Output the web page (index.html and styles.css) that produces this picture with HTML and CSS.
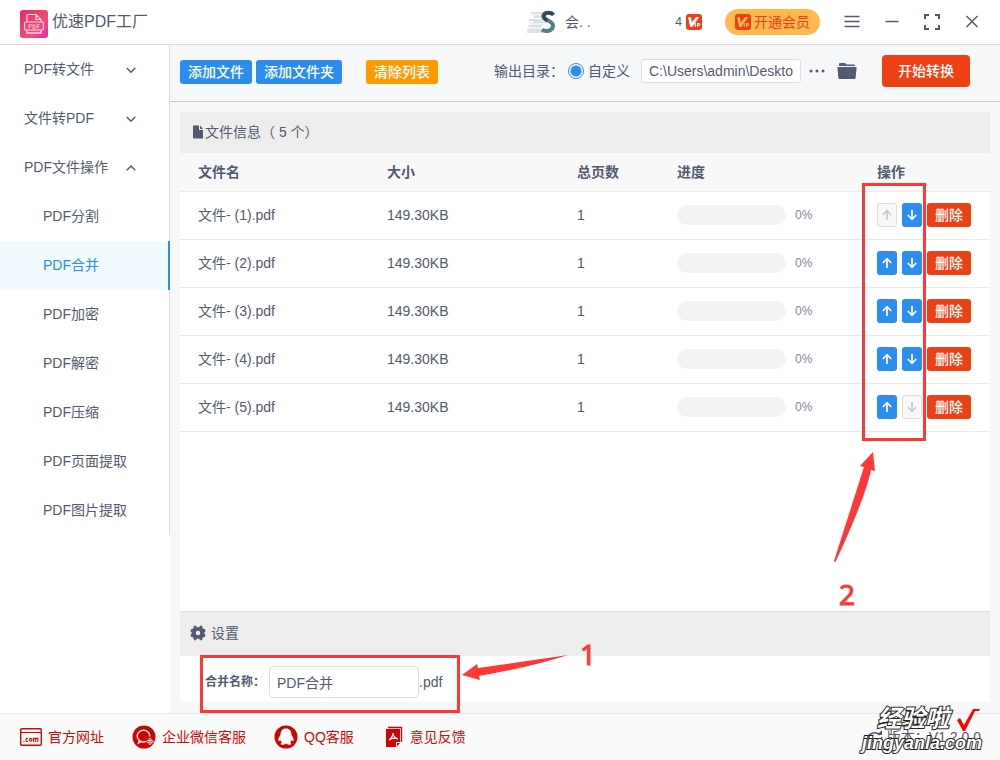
FILE: index.html
```html
<!DOCTYPE html>
<html lang="zh-CN">
<head>
<meta charset="utf-8">
<title>优速PDF工厂</title>
<link rel="stylesheet" href="styles.css">
</head>
<body>
<svg class="defs" aria-hidden="true">
  <symbol id="down" viewBox="0 0 10 10"><path d="M1.5 3.3 5 6.8l3.500-3.500" fill="none" stroke="currentColor" stroke-width="1.200"/></symbol>
  <symbol id="up" viewBox="0 0 10 10"><path d="M1.5 6.800 5 3.300l3.500 3.500" fill="none" stroke="currentColor" stroke-width="1.200"/></symbol>
  <symbol id="arrow-up" viewBox="0 0 12 12"><path d="M6 11V2M1.800 6 6 1.700 10.200 6" fill="none" stroke="currentColor" stroke-width="1.700"/></symbol>
  <symbol id="arrow-down" viewBox="0 0 12 12"><path d="M6 1v9M1.800 6 6 10.300 10.200 6" fill="none" stroke="currentColor" stroke-width="1.700"/></symbol>
  <symbol id="vip" viewBox="0 0 16 16"><rect width="16" height="16" rx="3" fill="#ee4014"/><path d="M2 3.300h3l.8 5.200L10 3h3.200L6.300 13H4.200z" fill="currentColor"/><path d="M9.300 9v4M11.500 13V9.500h1.300a.9.9 0 0 1 0 1.900h-1.300" fill="none" stroke="currentColor" stroke-width="1.100"/></symbol>
</svg>
<header class="titlebar">
  <svg class="logo" viewBox="0 0 28 28" aria-hidden="true">
    <defs><linearGradient id="lg" x1="0" y1="0" x2="1" y2="1"><stop offset="0" stop-color="#e62e5c"/><stop offset=".65" stop-color="#ee4f7d"/><stop offset="1" stop-color="#e324ac"/></linearGradient></defs>
    <rect width="28" height="28" rx="3" fill="url(#lg)"/>
    <g fill="none" stroke="#fbd3df" stroke-width="1.200"><path d="M7 12V5.500a1 1 0 0 1 1-1h8l5 5V12M16 4.500v5h5"/><rect x="4.600" y="12" width="18.800" height="8" rx="1"/><path d="M7 20v3h14v-3" stroke-width="1.500"/><path d="M9 18.500v-4h1.500q1 0 1 1t-1 1H9M13 14.500v4h.7q1.600 0 1.600-2t-1.600-2zM17.300 18.500v-4h2.200M17.300 16.500h1.800" stroke-width=".9"/></g>
  </svg>
  <h1 class="app-name">优速PDF工厂</h1>
  <div class="account">
    <svg class="avatar" viewBox="0 0 30 24" aria-hidden="true"><g fill="none" stroke-width="1"><path d="M4 3h18M7 7h10M2 10h14M6 12h14M1 16h14M0 20h20M0 22h18" stroke="#b6c4c8"/><path d="M5 5h12M3 14h15M2 18h12" stroke="#dce2e4"/></g><path d="M26 4.500C24 2 17 2 16.500 6c-.5 4 9.500 4.500 9.500 9.500 0 6-8 6.500-11 4" fill="none" stroke="#4b8289" stroke-width="4"/><path d="M26.500 5C24 1.800 17.500 1.800 16.500 6q0 3 4 4.500" fill="none" stroke="#354854" stroke-width="3.500"/></svg>
    <span class="user-name">会. .</span>
    <span class="user-tail">4</span>
    <svg class="vip" aria-hidden="true"><use href="#vip"/></svg>
  </div>
  <button class="join"><svg class="vip" aria-hidden="true"><use href="#vip"/></svg>开通会员</button>
  <div class="window-tools">
    <button class="tool" aria-label="菜单"><svg viewBox="0 0 18 18"><path d="M1.500 3.500h15M1.500 8.500h15M1.500 13.500h15"/></svg></button>
    <button class="tool" aria-label="最小化"><svg viewBox="0 0 18 18"><path d="M2.500 8.500h13"/></svg></button>
    <button class="tool" aria-label="最大化"><svg viewBox="0 0 18 18"><path d="M6 2H2v4M12 2h4v4M2 12v4h4M16 12v4h-4" stroke-width="2"/></svg></button>
    <button class="tool" aria-label="关闭"><svg viewBox="0 0 18 18"><path d="m3.500 3 11 11M14.500 3l-11 11"/></svg></button>
  </div>
</header>
<div class="body">
  <nav class="sidebar">
    <div class="menu">
      <button class="group">PDF转文件<svg><use href="#down"/></svg></button>
      <button class="group">文件转PDF<svg><use href="#down"/></svg></button>
      <button class="group">PDF文件操作<svg><use href="#up"/></svg></button>
      <a class="entry" href="#">PDF分割</a>
      <a class="entry active" href="#">PDF合并</a>
      <a class="entry" href="#">PDF加密</a>
      <a class="entry" href="#">PDF解密</a>
      <a class="entry" href="#">PDF压缩</a>
      <a class="entry" href="#">PDF页面提取</a>
      <a class="entry" href="#">PDF图片提取</a>
    </div>
  </nav>
  <main class="main">
    <div class="toolbar">
      <div class="file-actions">
        <button class="btn blue">添加文件</button>
        <button class="btn blue">添加文件夹</button>
        <button class="btn orange">清除列表</button>
      </div>
      <div class="output">
        <span class="output-label">输出目录：</span>
        <label class="radio"><input type="radio" name="dir" checked>自定义</label>
        <input class="path" type="text" value="C:\Users\admin\Deskto" aria-label="输出目录">
        <button class="icon-btn dots" aria-label="选择目录"><svg viewBox="0 0 16 4"><circle cx="2" cy="2" r="1.500"/><circle cx="8" cy="2" r="1.500"/><circle cx="14" cy="2" r="1.500"/></svg></button>
        <button class="icon-btn folder" aria-label="打开目录"><svg viewBox="0 0 20 18"><path d="M2 4V2q0-1 1-1h5l1.500 1.500H17q1 0 1 1V4z"/><path d="M1 5h18q.7 0 .6.800L18.600 16q-.1 1-1.100 1h-15q-1 0-1.100-1L.4 5.800Q.3 5 1 5z"/></svg></button>
        <button class="start">开始转换</button>
      </div>
    </div>
    <section class="panel">
      <h2 class="panel-title"><svg class="file-icon" viewBox="0 0 12 14"><path d="M1 .5h6V5h4v8.500H1zM8 .5 11 4H8z"/></svg>文件信息（ 5 个）</h2>
      <div class="table-wrap">
        <table class="files">
          <colgroup><col class="c-name"><col class="c-size"><col class="c-pages"><col class="c-progress"><col class="c-actions"></colgroup>
          <thead><tr><th>文件名</th><th>大小</th><th>总页数</th><th>进度</th><th>操作</th></tr></thead>
          <tbody>
            <tr><td>文件- (1).pdf</td><td>149.30KB</td><td>1</td><td><div class="progress"><span class="bar"></span>0%</div></td><td><div class="ops"><button class="move" disabled aria-label="上移"><svg><use href="#arrow-up"/></svg></button><button class="move" aria-label="下移"><svg><use href="#arrow-down"/></svg></button><button class="btn red">删除</button></div></td></tr>
            <tr><td>文件- (2).pdf</td><td>149.30KB</td><td>1</td><td><div class="progress"><span class="bar"></span>0%</div></td><td><div class="ops"><button class="move" aria-label="上移"><svg><use href="#arrow-up"/></svg></button><button class="move" aria-label="下移"><svg><use href="#arrow-down"/></svg></button><button class="btn red">删除</button></div></td></tr>
            <tr><td>文件- (3).pdf</td><td>149.30KB</td><td>1</td><td><div class="progress"><span class="bar"></span>0%</div></td><td><div class="ops"><button class="move" aria-label="上移"><svg><use href="#arrow-up"/></svg></button><button class="move" aria-label="下移"><svg><use href="#arrow-down"/></svg></button><button class="btn red">删除</button></div></td></tr>
            <tr><td>文件- (4).pdf</td><td>149.30KB</td><td>1</td><td><div class="progress"><span class="bar"></span>0%</div></td><td><div class="ops"><button class="move" aria-label="上移"><svg><use href="#arrow-up"/></svg></button><button class="move" aria-label="下移"><svg><use href="#arrow-down"/></svg></button><button class="btn red">删除</button></div></td></tr>
            <tr><td>文件- (5).pdf</td><td>149.30KB</td><td>1</td><td><div class="progress"><span class="bar"></span>0%</div></td><td><div class="ops"><button class="move" aria-label="上移"><svg><use href="#arrow-up"/></svg></button><button class="move" disabled aria-label="下移"><svg><use href="#arrow-down"/></svg></button><button class="btn red">删除</button></div></td></tr>
          </tbody>
        </table>
        <div class="mark mark-two"></div>
        <svg class="pointer pointer-two" viewBox="0 0 42 112" aria-hidden="true"><path d="M0 109 30 15l-4-1L39 0l2 19-4-1Q32 44 2 109q-1 2-2 0z"/></svg>
        <span class="digit digit-two">2</span>
      </div>
      <h2 class="panel-title settings-title"><svg class="gear" viewBox="0 0 16 16"><path fill-rule="evenodd" d="M4 .8h2l.7 1.400h2.600L10 .8h2l.8 2.800 2.500.9v2L14 8l1.300 1.500v2l-2.500.9-.8 2.800h-2l-.7-1.400H6.700L6 15.200H4l-.8-2.800-2.500-.9v-2L2 8 .7 6.500v-2l2.500-.9zM8 5.700a2.300 2.300 0 1 0 0 4.600 2.300 2.300 0 0 0 0-4.600z"/></svg>设置</h2>
      <div class="settings">
        <label for="merge-name">合并名称：</label>
        <input id="merge-name" type="text" value="PDF合并">
        <span>.pdf</span>
        <div class="mark mark-one"></div>
        <svg class="pointer pointer-one" viewBox="0 0 108 28" aria-hidden="true"><path d="M107 1 17 14l-1-4L1 21l18 5-1-4Q70 13 107 1z"/></svg>
        <span class="digit digit-one">1</span>
      </div>
    </section>
  </main>
</div>
<footer class="footer">
  <a href="#" class="site"><svg width="22" height="18" viewBox="0 0 22 18"><rect x=".7" y=".7" width="20.600" height="16.600" rx="1" fill="none" stroke="#c80a0a" stroke-width="1.400"/><path d="M1 4.500h20" stroke="#c80a0a"/><path d="M4 13v1M8 10.500q-2-1-2 1.300t2 1.300M9.500 11.800q0-1.500 1.200-1.500t1.200 1.500-1.200 1.500-1.200-1.500M13.500 14v-3.600h4.300V14M15.700 10.500V14" fill="none" stroke="#c80a0a" stroke-width="1.100"/></svg>官方网址</a>
  <a href="#" class="wechat"><svg width="24" height="24" viewBox="0 0 24 24"><circle cx="12" cy="12" r="11.500" fill="#cc0505"/><path d="M17.800 11.500a6.300 5.800 0 1 0-4 5M7.500 15l-1 3 3-1.500" fill="none" stroke="#f9dede" stroke-width="1.500"/><g fill="#cc0505" stroke="#f9dede"><circle cx="18" cy="14.500" r="1.200"/><circle cx="16" cy="16.500" r="1.200"/><circle cx="20" cy="16.500" r="1.200"/><circle cx="18" cy="18.500" r="1"/></g></svg>企业微信客服</a>
  <a href="#" class="qq"><svg width="24" height="24" viewBox="0 0 24 24"><circle cx="12" cy="12" r="11.500" fill="#cc0505"/><path d="M12 3.500c-3.800 0-5.500 2.700-5.500 6.500-1.500 2-2.500 4-2 6 .5.700 1.300-.5 1.800-1 .3 1.300 1 2 1.500 2.500-1.800 1-1 2.300.5 2.300 1.500 0 2.500-.5 3.700-1.300 1.200.8 2.200 1.300 3.700 1.300 1.500 0 2.300-1.300.5-2.300.5-.5 1.200-1.200 1.500-2.500.5.500 1.300 1.700 1.800 1 .5-2-.5-4-2-6 0-3.800-1.700-6.500-5.500-6.500z" fill="#fff"/></svg>QQ客服</a>
  <a href="#" class="feedback"><svg width="18" height="22" viewBox="0 0 18 22"><path d="M3 1.500h13.500V16" fill="none" stroke="#cc0505" stroke-width="1.300"/><path d="M1 3h14v13h-4v5H1zM12 17h3l-3 3.500z" fill="#cc0505"/><path d="M4 14q4-3 4-7 0 4 5 6-5-2-9 1z" fill="none" stroke="#fff" stroke-width="1.200"/></svg>意见反馈</a>
  <div class="version"><svg width="18" height="16" viewBox="0 0 18 16"><path d="M2 8a7 6 0 0 1 12-2M16 8a7 6 0 0 1-12 3" fill="none" stroke="#515a6e" stroke-width="1.500"/><path d="M11 6h5V1z" fill="#515a6e"/></svg>版本：V1.2.0.0
    <div class="watermark"><span class="wm-cn">经验啦</span><span class="wm-site">jingyanla.com</span><svg class="tick" viewBox="0 0 24 24"><path d="M1 12l3-2 4 7L17 1h7l-1 2h-4L9 23H7z" fill="#f00"/></svg></div>
  </div>
</footer>
</body>
</html>
```
FILE: styles.css
```css
* { box-sizing: border-box; }
body {
  margin: 0; min-height: 100vh; display: flex; flex-direction: column;
  background: #fff; color: #515a6e; overflow: hidden;
  font: 14px/20px "Liberation Sans", "Noto Sans CJK SC", sans-serif;
}
button, input { font: inherit; color: inherit; margin: 0; }
button { border: 0; background: none; padding: 0; }
a { color: inherit; text-decoration: none; }
h1, h2 { margin: 0; font-weight: 400; }
svg { display: block; flex: none; }
.defs { position: absolute; width: 0; height: 0; }

.titlebar { display: flex; align-items: center; height: 45px; padding: 0 19px 0 20px; border-bottom: 1px solid #dcdee2; }
.logo { width: 28px; height: 28px; margin-top: 3px; }
.app-name { font-size: 16px; line-height: 24px; margin-left: 4px; flex: 1; }
.account { display: flex; align-items: center; width: 175px; margin-right: 23px; }
.avatar { width: 30px; height: 24px; margin-right: 8px; }
.user-name { flex: 1; }
.user-tail { font-size: 12px; margin-right: 4px; }
.vip { width: 16px; height: 16px; color: #fff; }
.join { display: flex; align-items: center; gap: 3px; height: 26px; padding: 0 10px; border-radius: 13px; background: #ffb950; color: #ee4014; }
.join .vip { color: #ffb950; }
.window-tools { display: flex; gap: 22px; margin-left: 23px; }
.tool svg { width: 18px; height: 18px; fill: none; stroke: #515a6e; stroke-width: 1.5; }

.body { display: flex; flex: 1; }
.sidebar { width: 170px; flex: none; }
.menu { border-right: 1px solid #dcdee2; }
.group, .entry { display: flex; align-items: center; width: 100%; height: 49px; padding-bottom: 2px; }
.group { justify-content: space-between; padding-left: 24px; padding-right: 32px; }
.group svg { width: 12px; height: 12px; margin-top: 2px; }
.entry { padding-left: 43px; }
.entry.active { width: 170px; background: #f0faff; color: #2d8cf0; border-right: 2px solid #2d8cf0; }

.main { flex: 1; min-width: 0; display: flex; flex-direction: column; background: #f5f7f9; }
.toolbar { display: flex; align-items: center; justify-content: space-between; height: 57px; padding: 0 30px 4px 10px; border-bottom: 1px solid #c8cbd0; }
.file-actions, .output { display: flex; align-items: center; }
.file-actions { gap: 4px; padding-top: 2px; }
.btn { height: 24px; padding: 0 8px; border-radius: 3px; color: #fff; font-weight: 500; white-space: nowrap; }
.blue { background: #2d8cf0; }
.orange { background: #f90; margin-left: 20px; }
.red { background: #ed4014; }
.output-label { width: 74px; white-space: nowrap; }
.radio { display: flex; align-items: center; gap: 4px; white-space: nowrap; }
.radio input { appearance: none; width: 16px; height: 16px; border: 1px solid #2d8cf0; border-radius: 50%; background: radial-gradient(circle, #2d8cf0 5px, #fff 6px); }
.path { width: 160px; height: 24px; margin-left: 11px; padding: 0 7px; border: 1px solid #dcdee2; border-radius: 3px; background: #fff; }
.icon-btn svg { fill: #515a6e; }
.dots { margin-left: 8px; }
.dots svg { width: 16px; height: 4px; }
.folder { margin: 0 25px 0 12px; }
.folder svg { width: 20px; height: 18px; }
.start { width: 88px; height: 32px; border-radius: 4px; background: #ed4014; color: #fff; font-weight: 500; }

.panel { display: flex; flex: 1; flex-direction: column; margin: 10px 10px 11px; background: #fff; }
.panel-title { display: flex; align-items: center; height: 41px; padding: 0 0 2px 12px; background: #ededed; font-size: 14px; }
.file-icon { width: 12px; height: 14px; margin-right: 1px; fill: #515a6e; }
.table-wrap { position: relative; flex: 1; }
.files { width: 100%; table-layout: fixed; border-collapse: collapse; }
.c-name { width: 189px; }
.c-size { width: 190px; }
.c-pages { width: 100px; }
.c-progress { width: 200px; }
.files th, .files td { padding: 0 0 0 18px; border-bottom: 1px solid #e8eaec; text-align: left; }
.files th { height: 38px; background: #f8f8f9; font-weight: 700; }
.files td { height: 48px; }
.progress { display: flex; align-items: center; gap: 9px; font-size: 12px; color: #808695; }
.bar { width: 109px; height: 20px; border-radius: 10px; background: #f3f3f3; }
.ops { display: flex; gap: 5px; }
.move { display: flex; align-items: center; justify-content: center; width: 20px; height: 24px; border-radius: 3px; background: #2d8cf0; color: #fff; }
.move svg { width: 12px; height: 12px; }
.move:disabled { background: #f7f7f7; border: 1px solid #dcdee2; color: #c5c8ce; }

.settings-title { height: 45px; padding-left: 10px; border-top: 1px solid #dcdee2; }
.gear { width: 16px; height: 16px; margin-right: 5px; fill: #515a6e; }
.settings { position: relative; display: flex; align-items: center; height: 46px; padding: 5px 0 0 25px; }
.settings label { width: 64px; font-size: 12px; font-weight: 700; white-space: nowrap; }
.settings input { width: 150px; height: 32px; padding: 0 7px; border: 1px solid #dcdee2; border-radius: 4px; }

.mark { position: absolute; border: 3px solid #fc3838; pointer-events: none; }
.mark-two { left: 682px; top: 30px; width: 64px; height: 258px; }
.mark-one { left: 20px; top: -1px; width: 260px; height: 58px; }
.pointer { position: absolute; fill: #fc3838; pointer-events: none; }
.pointer-two { left: 654px; top: 299px; width: 42px; height: 112px; }
.pointer-one { left: 281px; top: -2px; width: 108px; height: 28px; }
.digit { position: absolute; color: #fc3838; font: 28px/32px "Noto Sans", sans-serif; -webkit-text-stroke: 1px #fc3838; }
.digit-two { left: 659px; top: 425px; }
.digit-one { left: 400px; top: -18px; }

.footer { display: flex; align-items: center; height: 47px; padding: 0 19px 1px 20px; border-top: 1px solid #e8eaec; background: #fafafa; color: #c80a0a; }
.footer a { display: flex; align-items: center; gap: 6px; margin-right: 28px; }
.footer .feedback { gap: 7px; margin-left: 3px; }
.version { position: relative; display: flex; align-items: center; gap: 3px; margin-left: auto; color: #515a6e; white-space: nowrap; }
.watermark { position: absolute; right: -5px; top: -19px; width: 124px; height: 48px; font-style: italic; font-weight: 700; color: #fff; -webkit-text-stroke: 2px #222; paint-order: stroke fill; }
.wm-cn { position: absolute; left: 15px; top: -3px; font-size: 24px; line-height: 28px; }
.wm-site { position: absolute; left: 0; top: 24px; font-size: 18px; line-height: 22px; }
.tick { position: absolute; right: 6px; top: 0; width: 24px; height: 24px; }
```
